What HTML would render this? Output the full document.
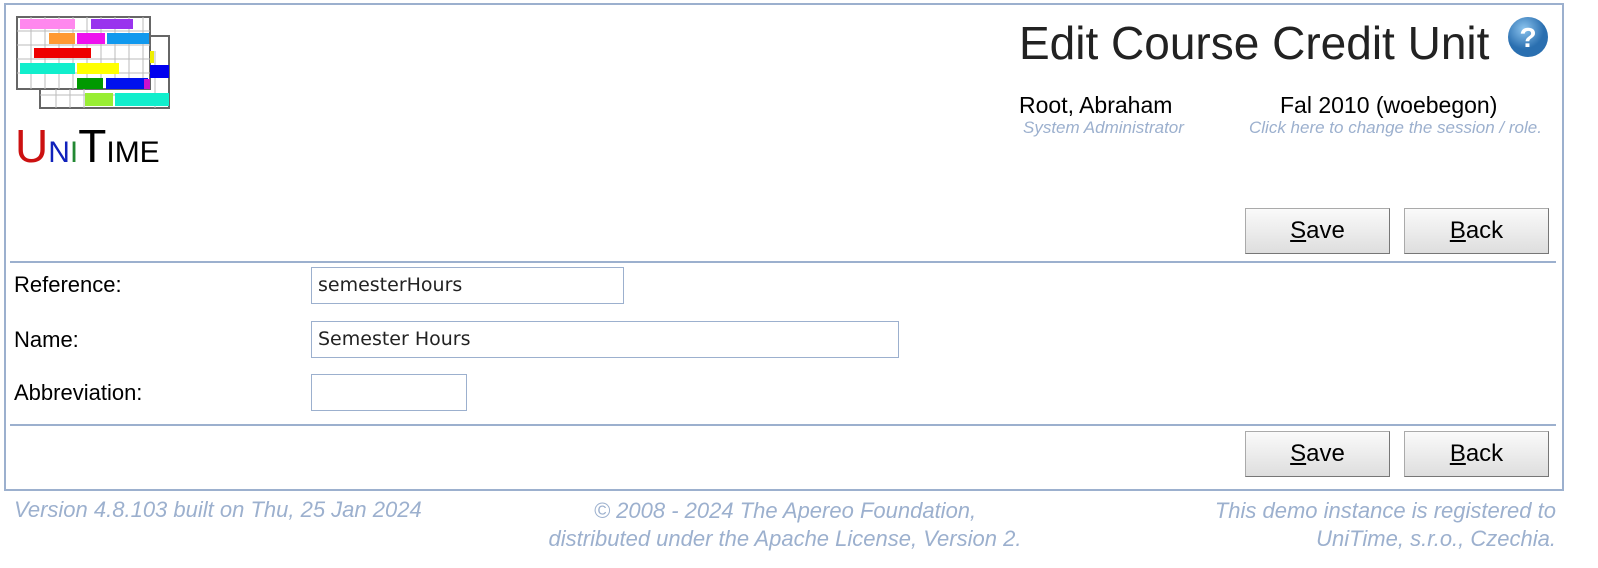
<!DOCTYPE html>
<html><head><style>
body{margin:0;width:1598px;height:568px;background:#fff;font-family:"Liberation Sans",Arial,sans-serif;position:relative;overflow:hidden}
.a{position:absolute;white-space:nowrap}
.frame{left:4px;top:3px;width:1560px;height:488px;border:2px solid #9cb0ce;box-sizing:border-box}
.hr{height:2px;background:#9cb0ce;left:10px;width:1546px}
.btn{width:145px;height:46px;border:1px solid #aaa;border-right-color:#777;border-bottom-color:#777;background:linear-gradient(#fafafa,#dedede);box-sizing:border-box;font-size:24px;text-align:center;line-height:44px;color:#000}
.lbl{font-size:22px;color:#000;left:14px}
.inp{border:1px solid #9cb0ce;box-sizing:border-box;font-family:"DejaVu Sans",sans-serif;font-size:19px;padding-left:6px;line-height:34px;color:#222;left:311px;height:37px}
.ft{font-size:22px;font-style:italic;color:#9cb0ce}
</style></head><body>
<div class="a frame"></div>
<svg class="a" style="left:15px;top:15px" width="160" height="96" viewBox="0 0 160 96">
<rect x="25" y="21" width="129" height="72" fill="#fff" stroke="#666" stroke-width="2"/>
<rect x="2" y="2" width="133" height="72" fill="#fff" stroke="#666" stroke-width="2"/>
<g stroke="#bbb" stroke-width="1">
<path d="M16 2V74M30 2V74M44 2V74M58 2V74M72 2V74M86 2V74M100 2V74M114 2V74M128 2V74M2 16H135M2 30H135M2 44H135M2 58H135M41 74V93M55 74V93M69 74V93M140 36V93M25 80H154"/>
</g>
<rect x="5" y="4" width="55" height="10" fill="#ff88ee"/>
<rect x="76" y="4" width="42" height="10" fill="#9933ee"/>
<rect x="34" y="18" width="26" height="11" fill="#ff9933"/>
<rect x="62" y="18" width="28" height="11" fill="#ee11ee"/>
<rect x="92" y="18" width="42" height="11" fill="#1199ee"/>
<rect x="19" y="33" width="57" height="10" fill="#ee0000"/>
<rect x="135" y="36" width="4" height="12" fill="#eeee00"/>
<rect x="5" y="48" width="55" height="11" fill="#11eecc"/>
<rect x="62" y="48" width="42" height="11" fill="#ffff00"/>
<rect x="135" y="50" width="19" height="13" fill="#0000ee"/>
<rect x="62" y="63" width="26" height="11" fill="#009900"/>
<rect x="91" y="63" width="42" height="11" fill="#0011ee"/>
<rect x="129" y="64" width="6" height="10" fill="#cc11cc"/>
<rect x="70" y="78" width="28" height="13" fill="#99ee33"/>
<rect x="100" y="78" width="54" height="13" fill="#11eecc"/>
</svg>
<div class="a" style="left:15px;top:120px;font-size:46px;line-height:52px"><span style="color:#cc1111">U</span><span style="color:#1122bb;font-size:30px">N</span><span style="color:#228833;font-size:30px">I</span><span style="color:#000">T</span><span style="font-size:30px">IME</span></div>
<div class="a" style="left:1019px;top:16px;font-size:46px;color:#222">Edit Course Credit Unit</div>
<svg class="a" style="left:1507px;top:16px" width="42" height="42"><defs><radialGradient id="g" cx="40%" cy="30%"><stop offset="0" stop-color="#8cc4ee"/><stop offset="1" stop-color="#2a6fb0"/></radialGradient></defs><circle cx="21" cy="21" r="20" fill="url(#g)"/><text x="21" y="31" text-anchor="middle" font-family="Liberation Sans" font-weight="bold" font-size="28" fill="#fff">?</text></svg>
<div class="a" style="left:1019px;top:92px;font-size:23px">Root, Abraham</div>
<div class="a ft" style="left:1023px;top:118px;font-size:17px">System Administrator</div>
<div class="a" style="left:1280px;top:92px;font-size:23px">Fal 2010 (woebegon)</div>
<div class="a ft" style="left:1249px;top:118px;font-size:17px">Click here to change the session / role.</div>
<div class="a btn" style="left:1245px;top:208px"><u>S</u>ave</div>
<div class="a btn" style="left:1404px;top:208px"><u>B</u>ack</div>
<div class="a hr" style="top:261px"></div>
<div class="a lbl" style="top:272px">Reference:</div>
<div class="a inp" style="top:267px;width:313px">semesterHours</div>
<div class="a lbl" style="top:327px">Name:</div>
<div class="a inp" style="top:321px;width:588px">Semester Hours</div>
<div class="a lbl" style="top:380px">Abbreviation:</div>
<div class="a inp" style="top:374px;width:156px"></div>
<div class="a hr" style="top:424px"></div>
<div class="a btn" style="left:1245px;top:431px"><u>S</u>ave</div>
<div class="a btn" style="left:1404px;top:431px"><u>B</u>ack</div>
<div class="a ft" style="left:14px;top:497px">Version 4.8.103 built on Thu, 25 Jan 2024</div>
<div class="a ft" style="left:480px;top:497px;width:610px;text-align:center;line-height:28px">© 2008 - 2024 The Apereo Foundation,<br>distributed under the Apache License, Version 2.</div>
<div class="a ft" style="right:42px;top:497px;text-align:right;line-height:28px">This demo instance is registered to<br>UniTime, s.r.o., Czechia.</div>
</body></html>
